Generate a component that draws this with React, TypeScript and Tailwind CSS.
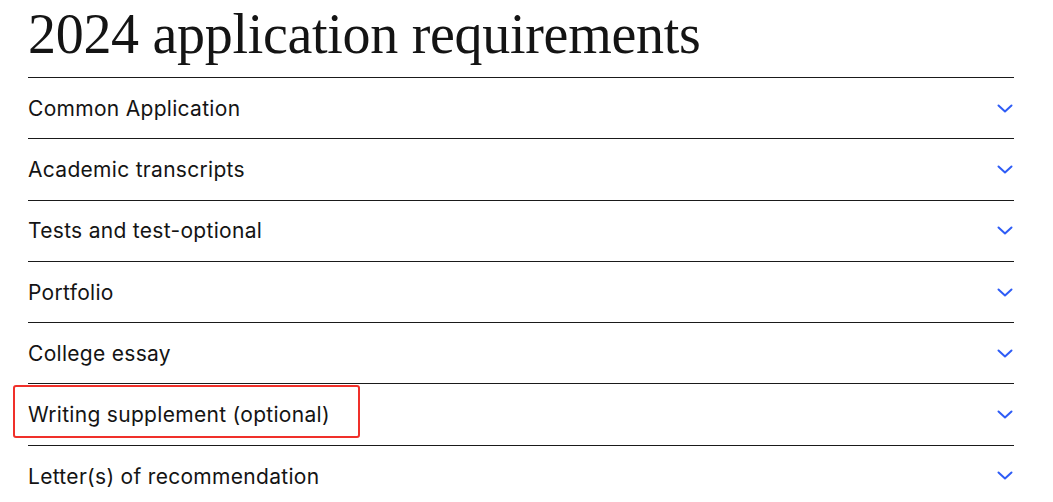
const items = [
  "Common Application",
  "Academic transcripts",
  "Tests and test-optional",
  "Portfolio",
  "College essay",
  "Writing supplement (optional)",
  "Letter(s) of recommendation",
];

function Chevron() {
  return (
    <svg width="16" height="9" viewBox="0 0 16 9" fill="none" className="mr-[1px]">
      <polyline
        points="1.5,1.5 8,7.5 14.5,1.5"
        stroke="#2e5cf6"
        strokeWidth="2"
        strokeLinecap="round"
        strokeLinejoin="round"
      />
    </svg>
  );
}

export default function App() {
  return (
    <div className="min-h-screen bg-white pl-[28px] pr-[39px]">
      <h1 className="h-[77px] pt-[2px] text-[56px] leading-[64px] tracking-[-0.3px] text-[#141414] font-['Liberation_Serif',serif]">
        2024 application requirements
      </h1>
      <ul className="border-t border-[#1a1a1a]">
        {items.map((label, i) => (
          <li
            key={label}
            className="relative flex h-[61.3px] items-center justify-between border-b border-[#1a1a1a] font-['Inter',sans-serif] text-[21px] tracking-[0.3px] text-[#141414]"
          >
            <span className="pt-[1px]">{label}</span>
            <Chevron />
            {i === 5 && (
              <span className="absolute left-[-15px] top-[1px] h-[53px] w-[347px] rounded-[3px] border-2 border-[#f0302a]" />
            )}
          </li>
        ))}
      </ul>
    </div>
  );
}
